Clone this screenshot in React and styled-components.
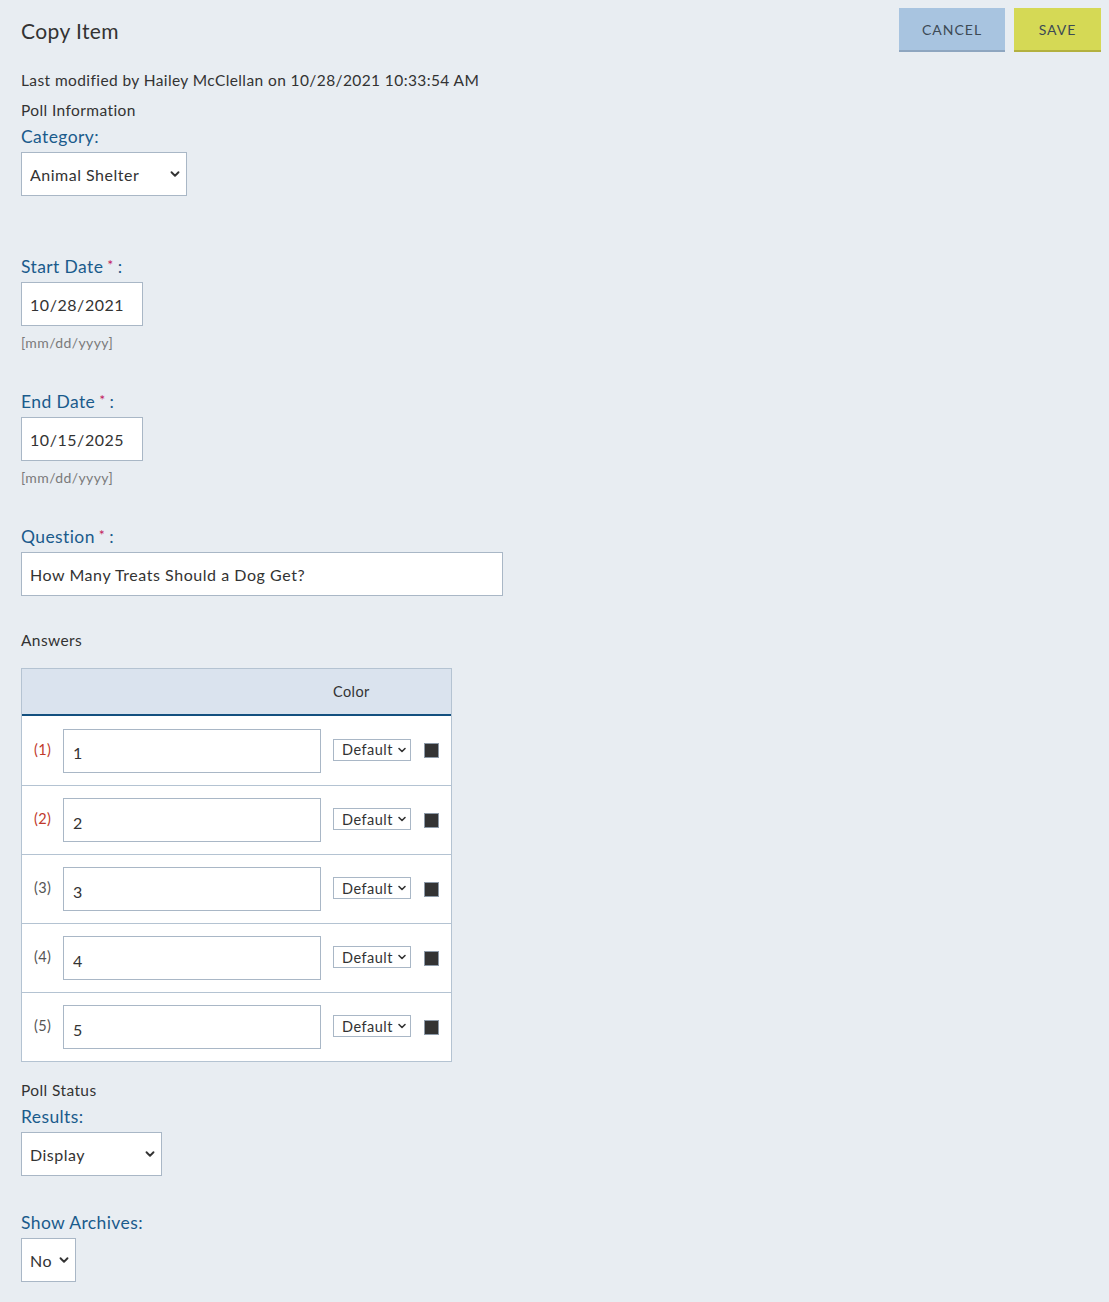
import React from 'react';
import styled, { createGlobalStyle } from 'styled-components';
import { ChevronDown } from 'lucide-react';

const GlobalStyle = createGlobalStyle`
  html, body {
    margin: 0;
    padding: 0;
    background: #e8edf2;
    font-family: Lato, "Open Sans", sans-serif;
    letter-spacing: 0.4px;
    color: #333;
  }
  * { box-sizing: border-box; }
`;

const answers = [
  { n: 1, value: '1', flagged: true },
  { n: 2, value: '2', flagged: true },
  { n: 3, value: '3' },
  { n: 4, value: '4' },
  { n: 5, value: '5' },
];

const Select = ({ width, small, options }) => (
  <SelectWrap width={width} small={small}>
    <NativeSelect small={small} defaultValue={options[0]}>
      {options.map((o) => (
        <option key={o}>{o}</option>
      ))}
    </NativeSelect>
    <Chevron small={small}>
      <ChevronDown size={small ? 12 : 14} strokeWidth={3.2} />
    </Chevron>
  </SelectWrap>
);

const App = () => {
  return (
    <Page>
      <GlobalStyle />
      <Header>
        <Title>Copy Item</Title>
        <Actions>
          <Button kind="cancel">CANCEL</Button>
          <Button kind="save">SAVE</Button>
        </Actions>
      </Header>

      <Meta>Last modified by Hailey McClellan on 10/28/2021 10:33:54 AM</Meta>
      <Section>Poll Information</Section>
      <Label>Category:</Label>
      <Select width={166} options={['Animal Shelter']} />

      <Field gap={58}>
        <Label>
          Start Date<Req>*</Req>:
        </Label>
        <TextInput width={122} defaultValue="10/28/2021" />
        <Hint>[mm/dd/yyyy]</Hint>
      </Field>

      <Field gap={37}>
        <Label>
          End Date<Req>*</Req>:
        </Label>
        <TextInput width={122} defaultValue="10/15/2025" />
        <Hint>[mm/dd/yyyy]</Hint>
      </Field>

      <Field gap={37}>
        <Label>
          Question<Req>*</Req>:
        </Label>
        <TextInput width={482} defaultValue="How Many Treats Should a Dog Get?" />
      </Field>

      <Section top={34}>Answers</Section>
      <Table>
        <HeadRow>
          <HeadCell>Color</HeadCell>
        </HeadRow>
        {answers.map((a) => (
          <Row key={a.n}>
            <Num flagged={a.flagged}>({a.n})</Num>
            <TextInput width={258} defaultValue={a.value} inRow />
            <Select small width={78} options={['Default']} />
            <Swatch />
          </Row>
        ))}
      </Table>

      <Section top={18}>Poll Status</Section>
      <Label>Results:</Label>
      <Select width={141} options={['Display']} />

      <Field gap={36}>
        <Label>Show Archives:</Label>
        <Select width={55} options={['No']} />
      </Field>
    </Page>
  );
};

export default App;

// Styled Components

const Page = styled.div`
  padding: 0 8px 20px 21px;
  min-height: 1302px;
`;

const Header = styled.div`
  display: flex;
  justify-content: space-between;
  align-items: flex-start;
  padding-top: 8px;
`;

const Title = styled.h1`
  margin: 10px 0 0;
  font-size: 21px;
  font-weight: 400;
  color: #333;
  line-height: 26px;
`;

const Actions = styled.div`
  display: flex;
  gap: 9px;
`;

const Button = styled.button`
  height: 44px;
  width: ${(p) => (p.kind === 'save' ? '87px' : '106px')};
  border: none;
  border-bottom: 2px solid ${(p) => (p.kind === 'save' ? '#b3b13f' : '#8ea6c0')};
  background: ${(p) => (p.kind === 'save' ? '#d5d955' : '#a8c4e0')};
  color: #3d4a55;
  font-family: Lato, sans-serif;
  font-size: 14px;
  letter-spacing: 1px;
  cursor: pointer;
`;

const Meta = styled.div`
  margin-top: 18px;
  font-size: 15.5px;
  line-height: 20px;
  color: #333;
`;

const Section = styled.div`
  margin-top: ${(p) => p.top || 10}px;
  font-size: 15.5px;
  line-height: 20px;
  color: #333;
`;

const Label = styled.div`
  margin-top: 6px;
  margin-bottom: 4px;
  font-size: 17.5px;
  line-height: 22px;
  color: #1a5b8c;
`;

const Req = styled.span`
  color: #c2185b;
  font-size: 14px;
  margin: 0 4px 0 4px;
  vertical-align: 3px;
`;

const Field = styled.div`
  margin-top: ${(p) => p.gap}px;
`;

const TextInput = styled.input`
  display: block;
  width: ${(p) => p.width}px;
  height: 44px;
  padding: ${(p) => (p.inRow ? '4px 0 0 9px' : '0 8px')};
  border: 1px solid #a9b7c6;
  background: #fff;
  font-family: Lato, sans-serif;
  font-size: 16px;
  letter-spacing: 0.55px;
  color: #333;
  outline: none;
`;

const Hint = styled.div`
  margin-top: 8px;
  font-size: 14px;
  line-height: 18px;
  color: #7a7a7a;
`;

const SelectWrap = styled.div`
  position: relative;
  width: ${(p) => p.width}px;
  height: ${(p) => (p.small ? 22 : 44)}px;
  flex: none;
`;

const NativeSelect = styled.select`
  appearance: none;
  width: 100%;
  height: 100%;
  border: 1px solid #a9b7c6;
  border-radius: 0;
  background: #fff;
  padding: 0 0 0 8px;
  font-family: Lato, sans-serif;
  font-size: ${(p) => (p.small ? 14.5 : 16)}px;
  letter-spacing: 0.5px;
  color: #333;
  outline: none;
`;

const Chevron = styled.span`
  position: absolute;
  right: ${(p) => (p.small ? 3 : 5)}px;
  top: 50%;
  transform: translateY(-50%);
  display: flex;
  color: #333;
  pointer-events: none;
`;

const Table = styled.div`
  margin-top: 18px;
  width: 431px;
  border: 1px solid #b4c3d2;
  background: #fff;
`;

const HeadRow = styled.div`
  height: 47px;
  background: #dae3ee;
  border-bottom: 2px solid #13507f;
  display: flex;
  align-items: center;
`;

const HeadCell = styled.div`
  margin-left: 311px;
  font-size: 14.5px;
  color: #333;
`;

const Row = styled.div`
  height: 69px;
  display: flex;
  align-items: center;
  border-top: 1px solid #b4c3d2;
  padding-left: 12px;

  &:nth-child(2) {
    border-top: none;
  }

  & > ${SelectWrap} {
    margin-left: 12px;
    margin-top: -2px;
  }
`;

const Num = styled.span`
  width: 29px;
  margin-top: -3px;
  font-size: 14.5px;
  color: ${(p) => (p.flagged ? '#c0392b' : '#555')};
`;

const Swatch = styled.span`
  width: 15px;
  height: 15px;
  margin-left: 13px;
  background: #333;
  border: 1px solid #8d9aa8;
`;
